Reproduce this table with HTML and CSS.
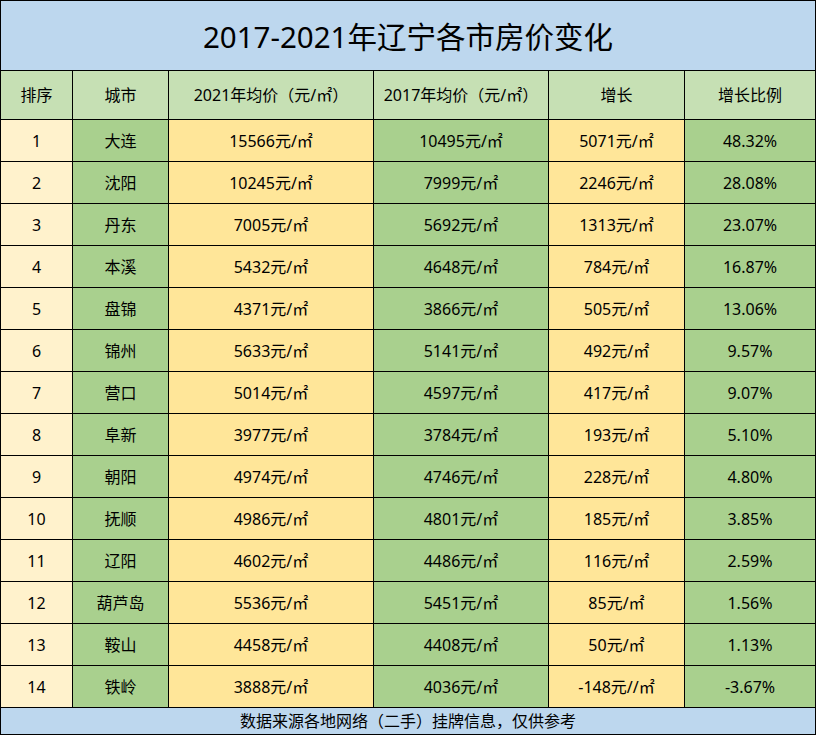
FILE: index.html
```html
<!DOCTYPE html>
<html lang="zh-CN">
<head>
<meta charset="utf-8">
<title>2017-2021年辽宁各市房价变化</title>
<link rel="stylesheet" href="styles.css">
</head>
<body>
<div class="sheet">
  <div class="title">2017-2021年辽宁各市房价变化</div>

  <div class="hd">排序</div><div class="hd">城市</div><div class="hd">2021年均价（元/㎡）</div><div class="hd">2017年均价（元/㎡）</div><div class="hd">增长</div><div class="hd">增长比例</div>

  <div class="c rank">1</div><div class="c g">大连</div><div class="c y">15566元/㎡</div><div class="c g">10495元/㎡</div><div class="c y">5071元/㎡</div><div class="c g">48.32%</div>
  <div class="c rank">2</div><div class="c g">沈阳</div><div class="c y">10245元/㎡</div><div class="c g">7999元/㎡</div><div class="c y">2246元/㎡</div><div class="c g">28.08%</div>
  <div class="c rank">3</div><div class="c g">丹东</div><div class="c y">7005元/㎡</div><div class="c g">5692元/㎡</div><div class="c y">1313元/㎡</div><div class="c g">23.07%</div>
  <div class="c rank">4</div><div class="c g">本溪</div><div class="c y">5432元/㎡</div><div class="c g">4648元/㎡</div><div class="c y">784元/㎡</div><div class="c g">16.87%</div>
  <div class="c rank">5</div><div class="c g">盘锦</div><div class="c y">4371元/㎡</div><div class="c g">3866元/㎡</div><div class="c y">505元/㎡</div><div class="c g">13.06%</div>
  <div class="c rank">6</div><div class="c g">锦州</div><div class="c y">5633元/㎡</div><div class="c g">5141元/㎡</div><div class="c y">492元/㎡</div><div class="c g">9.57%</div>
  <div class="c rank">7</div><div class="c g">营口</div><div class="c y">5014元/㎡</div><div class="c g">4597元/㎡</div><div class="c y">417元/㎡</div><div class="c g">9.07%</div>
  <div class="c rank">8</div><div class="c g">阜新</div><div class="c y">3977元/㎡</div><div class="c g">3784元/㎡</div><div class="c y">193元/㎡</div><div class="c g">5.10%</div>
  <div class="c rank">9</div><div class="c g">朝阳</div><div class="c y">4974元/㎡</div><div class="c g">4746元/㎡</div><div class="c y">228元/㎡</div><div class="c g">4.80%</div>
  <div class="c rank">10</div><div class="c g">抚顺</div><div class="c y">4986元/㎡</div><div class="c g">4801元/㎡</div><div class="c y">185元/㎡</div><div class="c g">3.85%</div>
  <div class="c rank">11</div><div class="c g">辽阳</div><div class="c y">4602元/㎡</div><div class="c g">4486元/㎡</div><div class="c y">116元/㎡</div><div class="c g">2.59%</div>
  <div class="c rank">12</div><div class="c g">葫芦岛</div><div class="c y">5536元/㎡</div><div class="c g">5451元/㎡</div><div class="c y">85元/㎡</div><div class="c g">1.56%</div>
  <div class="c rank">13</div><div class="c g">鞍山</div><div class="c y">4458元/㎡</div><div class="c g">4408元/㎡</div><div class="c y">50元/㎡</div><div class="c g">1.13%</div>
  <div class="c rank">14</div><div class="c g">铁岭</div><div class="c y">3888元/㎡</div><div class="c g">4036元/㎡</div><div class="c y">-148元//㎡</div><div class="c g">-3.67%</div>

  <div class="foot">数据来源各地网络（二手）挂牌信息，仅供参考</div>
</div>
</body>
</html>
```

FILE: styles.css
```css
html, body {
  margin: 0;
  padding: 0;
  background: #ffffff;
}

.sheet {
  box-sizing: border-box;
  width: 816px;
  display: grid;
  grid-template-columns: 71px 95px 204px 174px 135px 130px;
  grid-template-rows: 69px 48px repeat(14, 41px) 26px;
  gap: 1px;
  padding: 1px;
  background: #000000;
  font-family: "Noto Sans", "Noto Sans CJK SC", sans-serif;
  font-size: 16px;
  color: #000000;
}

.sheet > div {
  display: flex;
  align-items: center;
  justify-content: center;
  white-space: nowrap;
  line-height: 1;
}

.title {
  grid-column: 1 / -1;
  background: #bdd7ee;
  font-size: 29.5px;
  padding-top: 2px;
}

.hd {
  background: #c6e0b4;
}

.rank {
  background: #fff2cc;
}

.g {
  background: #a9d08e;
}

.y {
  background: #ffe699;
}

.foot {
  grid-column: 1 / -1;
  background: #bdd7ee;
}
```
